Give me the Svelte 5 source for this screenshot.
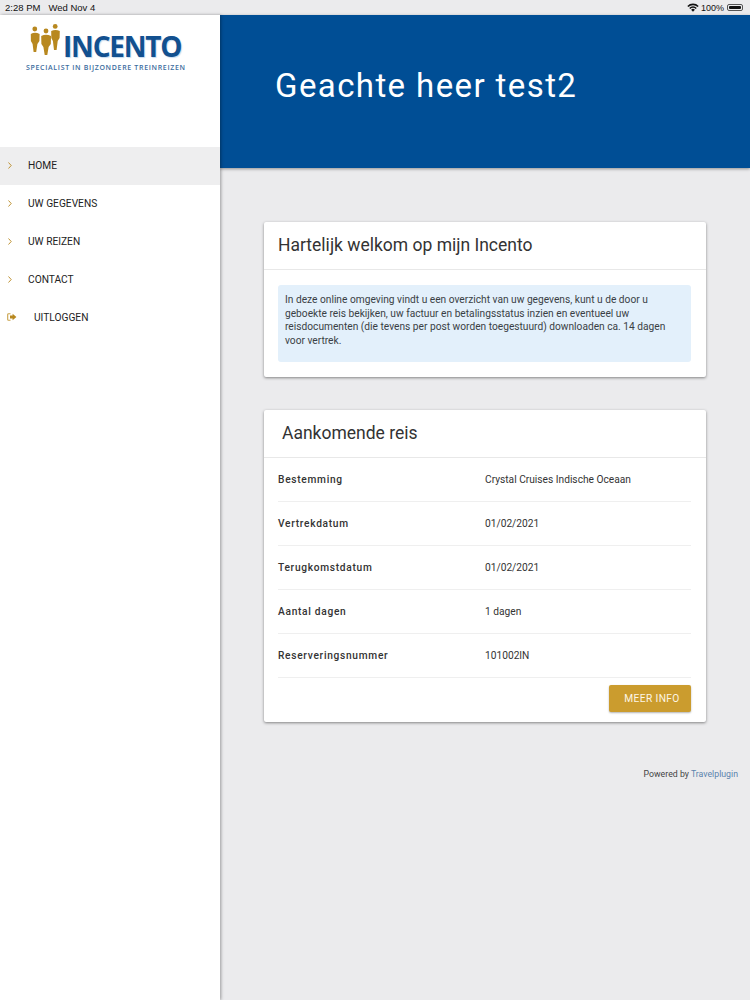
<script>
    const menu = ['HOME', 'UW GEGEVENS', 'UW REIZEN', 'CONTACT'];

    const trip = [
        ['Bestemming', 'Crystal Cruises Indische Oceaan'],
        ['Vertrekdatum', '01/02/2021'],
        ['Terugkomstdatum', '01/02/2021'],
        ['Aantal dagen', '1 dagen'],
        ['Reserveringsnummer', '101002IN']
    ];
</script>

<div class="page">
    <div class="statusbar">
        <span class="time">2:28 PM</span>
        <span class="date">Wed Nov 4</span>
        <span class="status-right">
            <svg width="12" height="9" viewBox="0 0 12 9">
                <path d="M0.3 3 A8 8 0 0 1 11.7 3 L10.6 4.1 A6.4 6.4 0 0 0 1.4 4.1 Z" fill="#111" />
                <path d="M2.2 4.9 A5.3 5.3 0 0 1 9.8 4.9 L8.7 6 A3.7 3.7 0 0 0 3.3 6 Z" fill="#111" />
                <path d="M4.1 6.8 A2.7 2.7 0 0 1 7.9 6.8 L6 8.8 Z" fill="#111" />
            </svg>
            <span>100%</span>
            <span class="battery"><span class="battery-fill"></span></span>
        </span>
    </div>

    <div class="main">
        <aside class="sidebar">
            <div class="logo">
                <div class="logo-top">
                    <svg class="people" width="30" height="31" viewBox="0 0 30 31">
                        <g fill="#b8881f">
                            <circle cx="4.8" cy="5" r="2.4" />
                            <path d="M0.8 10 Q5 7.6 9.6 10 L9.4 17 L7.4 20 L6.2 28 L3.6 28 L2.6 20 L0.9 17 Z" />
                            <circle cx="16" cy="7" r="2.4" />
                            <path d="M11.2 12 Q16 9.6 21 12 L20.8 20 L18.6 23 L17.3 31 L14.7 31 L13.4 23 L11.4 20 Z" />
                            <circle cx="25.2" cy="2.4" r="2.4" />
                            <path d="M21.2 7 Q25.4 4.8 29.8 7 L29.6 14 L27.7 17 L26.6 26 L24 26 L22.9 17 L21.3 14 Z" />
                        </g>
                    </svg>
                    <span class="logo-name">INCENTO</span>
                </div>
                <div class="logo-sub">SPECIALIST IN BIJZONDERE TREINREIZEN</div>
            </div>

            <nav class="menu">
                {#each menu as item, i}
                    <div class="menu-item" class:active={i === 0}>
                        <svg class="chevron" width="4" height="7" viewBox="0 0 4 7">
                            <path d="M0.5 0.5 L3.2 3.5 L0.5 6.5" fill="none" stroke="#b8881f" stroke-width="0.9" />
                        </svg>
                        <span>{item}</span>
                    </div>
                {/each}
                <div class="menu-item logout">
                    <svg class="signout" width="10" height="8" viewBox="0 0 10 8">
                        <path d="M3.5 0.7 H1.6 Q0.7 0.7 0.7 1.6 V6.4 Q0.7 7.3 1.6 7.3 H3.5" fill="none" stroke="#c9a24a" stroke-width="1.1" />
                        <path d="M3 2.6 H5.6 V0.8 L9.4 4 L5.6 7.2 V5.4 H3 Z" fill="#b8881f" />
                    </svg>
                    <span>UITLOGGEN</span>
                </div>
            </nav>
        </aside>

        <div class="content">
            <header class="hero">
                <h1>Geachte heer test2</h1>
            </header>

            <div class="cards">
                <section class="card">
                    <h2 class="card-title">Hartelijk welkom op mijn Incento</h2>
                    <div class="card-body">
                        <div class="notice">
                            In deze online omgeving vindt u een overzicht van uw gegevens, kunt u de door u
                            geboekte reis bekijken, uw factuur en betalingsstatus inzien en eventueel uw
                            reisdocumenten (die tevens per post worden toegestuurd) downloaden ca. 14 dagen
                            voor vertrek.
                        </div>
                    </div>
                </section>

                <section class="card">
                    <h2 class="card-title trip-title">Aankomende reis</h2>
                    <div class="trip">
                        {#each trip as row}
                            <div class="row">
                                <span class="label">{row[0]}</span>
                                <span class="value">{row[1]}</span>
                            </div>
                        {/each}
                        <div class="actions">
                            <button class="more">MEER INFO</button>
                        </div>
                    </div>
                </section>

                <div class="powered">Powered by <span class="link">Travelplugin</span></div>
            </div>
        </div>
    </div>
</div>

<style>
    :global(body) {
        background: #ebebed;
    }
    .page {
        width: 750px;
        height: 1000px;
        overflow: hidden;
        display: flex;
        flex-direction: column;
        font-family: Roboto, "Liberation Sans", sans-serif;
        color: #333;
    }

    .statusbar {
        height: 15px;
        flex: none;
        display: flex;
        align-items: center;
        padding: 0 7px 0 5px;
        background: #ebebed;
        color: #111;
        font-size: 9.5px;
        font-family: "Liberation Sans", sans-serif;
    }
    .date {
        margin-left: 8px;
    }
    .status-right {
        margin-left: auto;
        display: flex;
        align-items: center;
        gap: 2px;
        font-size: 9px;
    }
    .battery {
        width: 16px;
        height: 7px;
        margin-left: 1px;
        padding: 1px;
        box-sizing: border-box;
        border: 0.5px solid #555;
        border-radius: 2px;
    }
    .battery-fill {
        display: block;
        height: 100%;
        background: #111;
        border-radius: 1px;
    }

    .main {
        flex: 1;
        display: flex;
        min-height: 0;
    }

    .sidebar {
        width: 220px;
        flex: none;
        background: #fff;
        box-shadow: 1px 0 3px rgba(0, 0, 0, 0.35);
        position: relative;
        z-index: 2;
    }

    .logo {
        height: 132px;
        box-sizing: border-box;
        padding: 9px 0 0 26px;
    }
    .logo-top {
        display: flex;
        align-items: flex-end;
        height: 36px;
        padding-left: 4px;
    }
    .people {
        margin-bottom: 5px;
    }
    .logo-name {
        margin-left: 3px;
        font-family: "Open Sans", "Liberation Sans", sans-serif;
        font-weight: 700;
        font-size: 28px;
        line-height: 28px;
        letter-spacing: -1.2px;
        color: #12508f;
        text-shadow: 1px 1px 1px rgba(110, 160, 210, 0.4);
    }
    .logo-sub {
        margin-top: 3px;
        font-family: "Open Sans", "Liberation Sans", sans-serif;
        font-weight: 600;
        font-size: 7px;
        line-height: 10px;
        letter-spacing: 0.68px;
        white-space: nowrap;
        color: #3c6c9e;
    }

    .menu-item {
        height: 38px;
        box-sizing: border-box;
        padding: 0 0 2px 8px;
        display: flex;
        align-items: center;
        font-size: 10.2px;
        color: #222;
    }
    .menu-item span {
        margin-left: 16px;
    }
    .menu-item.active {
        background: #eeeeef;
    }
    .logout .signout {
        margin-left: -1px;
    }
    .logout span {
        margin-left: 17px;
    }

    .content {
        flex: 1;
        min-width: 0;
    }
    .hero {
        height: 153px;
        box-sizing: border-box;
        padding: 51px 0 0 55px;
        background: #004e95;
        box-shadow: 0 1px 3px rgba(0, 0, 0, 0.4);
    }
    .hero h1 {
        margin: 0;
        font-size: 33px;
        line-height: 40px;
        font-weight: 400;
        letter-spacing: 1.4px;
        color: #fff;
    }

    .cards {
        padding: 54px 44px 0;
        display: flex;
        flex-direction: column;
        gap: 33px;
    }
    .card {
        background: #fff;
        border-radius: 2px;
        box-shadow: 0 1px 3px rgba(0, 0, 0, 0.45);
    }
    .card-title {
        margin: 0;
        height: 48px;
        box-sizing: border-box;
        padding: 0 14px 1px;
        display: flex;
        align-items: center;
        border-bottom: 1px solid #e8e8e8;
        font-size: 17.5px;
        font-weight: 400;
        color: #333;
    }
    .trip-title {
        padding-left: 18px;
    }
    .card-body {
        padding: 15px 15px 15px 14px;
    }
    .notice {
        padding: 8px 7px 14px;
        background: #e3f0fb;
        border-radius: 3px;
        font-size: 10.2px;
        line-height: 13.7px;
        color: #3a3f45;
    }

    .trip {
        padding: 0 15px 10px 14px;
    }
    .row {
        height: 44px;
        box-sizing: border-box;
        display: flex;
        align-items: center;
        border-bottom: 1px solid #efefef;
        font-size: 10.2px;
    }
    .label {
        width: 207px;
        font-weight: 500;
        letter-spacing: 0.7px;
    }
    .actions {
        display: flex;
        justify-content: flex-end;
        padding-top: 7px;
    }
    .more {
        width: 82px;
        height: 27px;
        padding: 0 0 0 4px;
        border: none;
        border-radius: 2px;
        background: #cb9c2e;
        box-shadow: 0 1px 2px rgba(0, 0, 0, 0.3);
        color: #fdf6e6;
        font-family: inherit;
        font-size: 10.2px;
        letter-spacing: 0.4px;
    }

    .powered {
        margin-top: 14px;
        margin-right: -32px;
        text-align: right;
        font-size: 8.75px;
        color: #444;
    }
    .link {
        color: #5b83ad;
    }
</style>
